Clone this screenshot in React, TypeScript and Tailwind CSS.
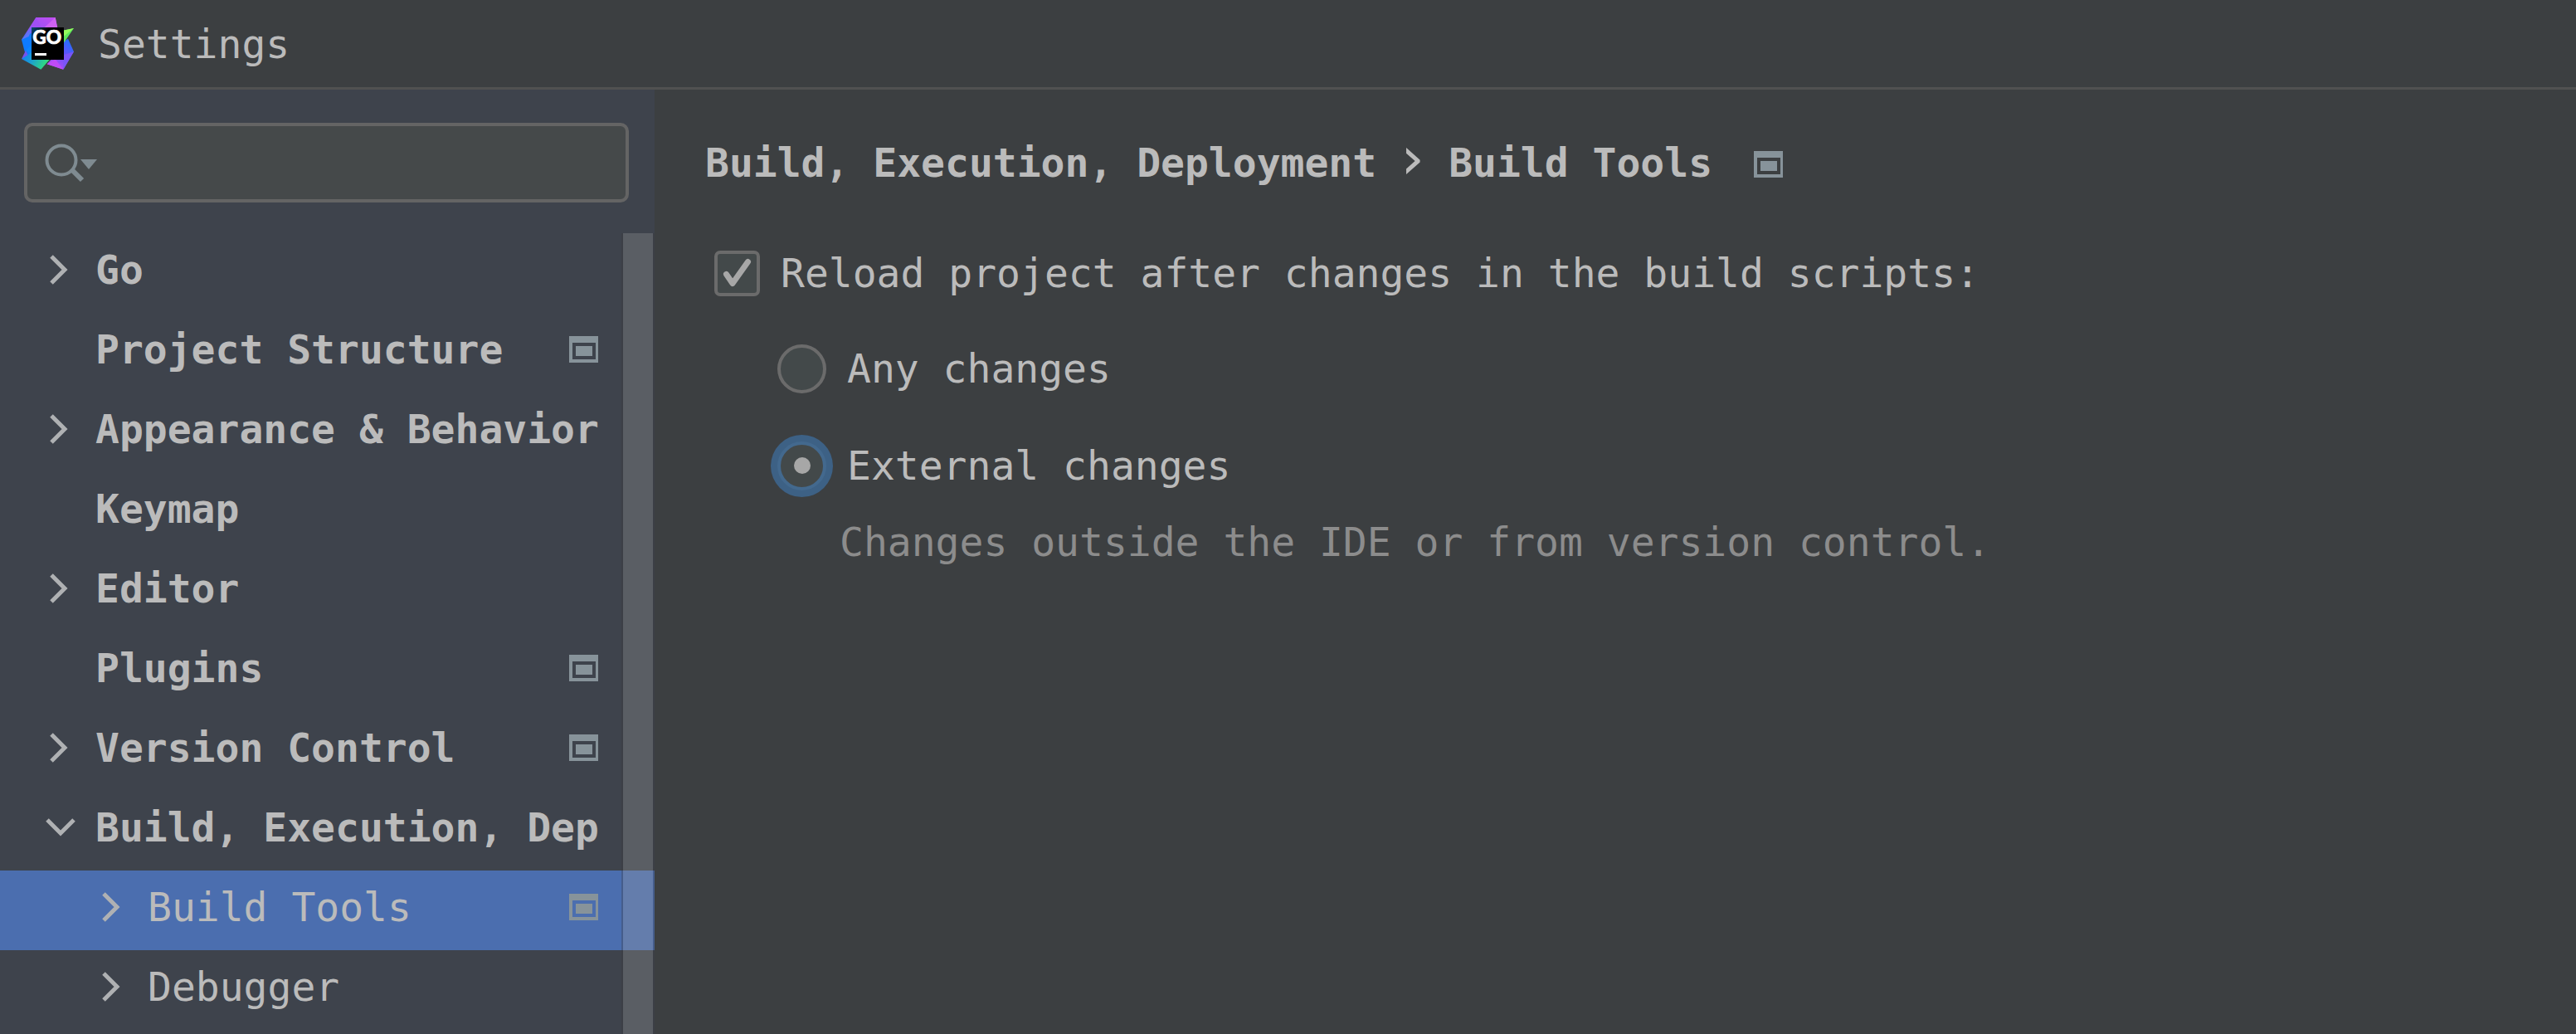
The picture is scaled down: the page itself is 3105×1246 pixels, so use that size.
import { useState } from "react";

type TreeItem = {
  label: string;
  state?: "closed" | "open";
  child?: boolean;
  scoped?: boolean;
  selected?: boolean;
};

const items: TreeItem[] = [
  { label: "Go", state: "closed" },
  { label: "Project Structure", scoped: true },
  { label: "Appearance & Behavior", state: "closed" },
  { label: "Keymap" },
  { label: "Editor", state: "closed" },
  { label: "Plugins", scoped: true },
  { label: "Version Control", state: "closed", scoped: true },
  { label: "Build, Execution, Dep", state: "open" },
  { label: "Build Tools", state: "closed", child: true, scoped: true, selected: true },
  { label: "Debugger", state: "closed", child: true },
];

function Logo() {
  return (
    <svg className="size-[63px] shrink-0" viewBox="78 63 189 189" aria-hidden="true">
      <defs>
        <linearGradient id="top" x1="0" y1="1" x2="1" y2="0">
          <stop offset="0" stopColor="#2f7bfb" />
          <stop offset="0.45" stopColor="#9a52f6" />
          <stop offset="1" stopColor="#c44cf2" />
        </linearGradient>
        <linearGradient id="low" x1="0" y1="0" x2="1" y2="0.3">
          <stop offset="0" stopColor="#0a7bff" />
          <stop offset="0.45" stopColor="#1b9fd0" />
          <stop offset="1" stopColor="#32e07a" />
        </linearGradient>
        <linearGradient id="right" x1="1" y1="0" x2="0.3" y2="1">
          <stop offset="0" stopColor="#0f78ff" />
          <stop offset="0.45" stopColor="#5a55fb" />
          <stop offset="1" stopColor="#b84bf5" />
        </linearGradient>
        <linearGradient id="shade" x1="0" y1="0" x2="1" y2="1">
          <stop offset="0" stopColor="#0b4a78" />
          <stop offset="0.3" stopColor="#000" />
        </linearGradient>
      </defs>
      <path d="M130 63H200L208 105L150 150L78 143Z" fill="url(#top)" />
      <path d="M200 63L160 100H208Z" fill="#cf62f3" />
      <path d="M130 63L150 100H116Z" fill="#a04ff5" />
      <path d="M78 143L116 118V216L90 190Z" fill="#0d7bff" />
      <path d="M78 143L104 132L116 100Z" fill="#5d74f6" />
      <path d="M93 182L116 160V200Z" fill="#0a86ff" />
      <path d="M93 182L78 213L104 206Z" fill="#7454ee" />
      <path d="M78 213L116 188L182 212L148 251Z" fill="url(#low)" />
      <path d="M231 150L246 140L267 187L229 251L170 232L190 210Z" fill="url(#right)" />
      <path d="M200 214L229 251L170 232Z" fill="#c04bf6" />
      <path d="M231 198L267 187L229 251Z" fill="#7a55f8" />
      <path d="M228 110L267 102L230 156Z" fill="#5fe95c" />
      <path d="M228 110L267 102L230 132Z" fill="#97fb5c" />
      <path d="M114 99H231V216H114Z" fill="url(#shade)" />
      <text x="118" y="158" fontSize="68" fontWeight="900" fontFamily="Lato, sans-serif" fill="#fff" stroke="#fff" strokeWidth="2">
        GO
      </text>
      <path d="M126 192H168V201H126Z" fill="#fff" />
    </svg>
  );
}

function Chevron({ state }: { state?: "closed" | "open" }) {
  return (
    <svg className="size-12 shrink-0" viewBox="0 0 48 48" fill="none" stroke="#afb1b3" strokeWidth="5" aria-hidden="true">
      {state === "closed" && <path d="M14 8L30 24L14 40" />}
      {state === "open" && <path d="M9 15L25 31L41 15" />}
    </svg>
  );
}

function ScopeIcon() {
  return (
    <svg className="h-8 w-[35px] shrink-0" viewBox="0 0 35 32" fill="#87939a" aria-hidden="true">
      <path fillRule="evenodd" d="M0 0H35V32H0ZM4 8V28H32V8Z" />
      <path d="M8 12H28V24H8Z" />
    </svg>
  );
}

function Sidebar() {
  return (
    <aside className="flex w-[789px] shrink-0 flex-col bg-[#3e434c]">
      <label className="mr-[31px] ml-[29px] mt-10 flex h-24 items-center rounded-[10px] border-4 border-[#646464] bg-[#45494a] pl-5">
        <svg className="h-12 w-[68px] shrink-0" viewBox="0 0 68 48" aria-hidden="true">
          <circle cx="21" cy="21" r="17.5" fill="none" stroke="#7f8b91" strokeWidth="4" />
          <path d="M34 33L46 45" stroke="#7f8b91" strokeWidth="6" />
          <path d="M44 20H64L54 32Z" fill="#7f8b91" />
        </svg>
        <input aria-label="Search settings" className="w-full min-w-0 bg-transparent outline-none" />
      </label>
      <div className="relative mt-[37px] min-h-0 flex-1">
        <ul>
          {items.map((item) => (
            <li key={item.label}>
              <button
                className={`flex h-24 w-full items-center pr-[68px] pb-2 text-left whitespace-pre ${
                  item.selected ? "bg-[#4b6eaf]" : ""
                } ${item.child ? "pl-[111px]" : "pl-12 font-bold"}`}
              >
                <Chevron state={item.state} />
                <span className="ml-[19px] flex-1">{item.label}</span>
                {item.scoped && <ScopeIcon />}
              </button>
            </li>
          ))}
        </ul>
        <div className="absolute inset-y-0 right-0 w-10 border-x-2 border-[#383838]/30 bg-[#a6a6a6]/28 bg-clip-padding" />
      </div>
    </aside>
  );
}

function Radio({ label, checked, onSelect }: { label: string; checked: boolean; onSelect: () => void }) {
  return (
    <label className="flex h-16 items-center gap-[25px]">
      <span className="grid place-items-center">
        <input
          type="radio"
          name="reload"
          checked={checked}
          onChange={onSelect}
          className="col-start-1 row-start-1 size-[59px] appearance-none rounded-full border-4 border-[#6b6b6b] bg-[#43494a] checked:border-[#43698e] checked:ring-8 checked:ring-[#3d6185]"
        />
        {checked && <span className="col-start-1 row-start-1 size-5 rounded-full bg-[#a7a7a7]" />}
      </span>
      {label}
    </label>
  );
}

export default function App() {
  const [reload, setReload] = useState(true);
  const [mode, setMode] = useState("external");
  return (
    <div className="flex h-screen flex-col overflow-hidden bg-[#3c3f41] font-['DejaVu_Sans_Mono',monospace] text-5xl leading-[64px] text-[#bbbbbb]">
      <header className="flex h-[108px] shrink-0 items-center gap-[29px] border-b-3 border-[#515151] pl-[26px]">
        <Logo />
        <h1>Settings</h1>
      </header>
      <div className="flex min-h-0 flex-1">
        <Sidebar />
        <main className="flex min-w-0 flex-1 flex-col pt-14 pl-[61px] whitespace-nowrap">
          <h2 className="flex h-16 items-center font-bold">
            <span>Build, Execution, Deployment</span>
            <span className="flex w-[87px] justify-center pb-3 font-['DejaVu_Sans',sans-serif] text-7xl font-normal">›</span>
            <span>Build Tools</span>
            <span className="ml-[50px] pt-1">
              <ScopeIcon />
            </span>
          </h2>
          <label className="mt-[69px] ml-[11px] flex items-center gap-[25px]">
            <span className="grid place-items-center">
              <input
                type="checkbox"
                checked={reload}
                onChange={() => setReload(!reload)}
                className="col-start-1 row-start-1 size-[55px] appearance-none rounded-[7px] border-4 border-[#6b6b6b] bg-[#43494a]"
              />
              {reload && (
                <svg className="pointer-events-none col-start-1 row-start-1 size-[55px]" viewBox="0 0 55 55" fill="none" stroke="#a7a7a7" strokeWidth="7" strokeLinecap="round" strokeLinejoin="round" aria-hidden="true">
                  <path d="M14.5 28.5L22 39.5L40.5 13.5" />
                </svg>
              )}
            </span>
            Reload project after changes in the build scripts:
          </label>
          <div className="mt-[51px] ml-[87px] flex flex-col gap-[53px]">
            <Radio label="Any changes" checked={mode === "any"} onSelect={() => setMode("any")} />
            <Radio label="External changes" checked={mode === "external"} onSelect={() => setMode("external")} />
          </div>
          <p className="mt-7 ml-[162px] text-[#8c8c8c]">Changes outside the IDE or from version control.</p>
        </main>
      </div>
    </div>
  );
}
